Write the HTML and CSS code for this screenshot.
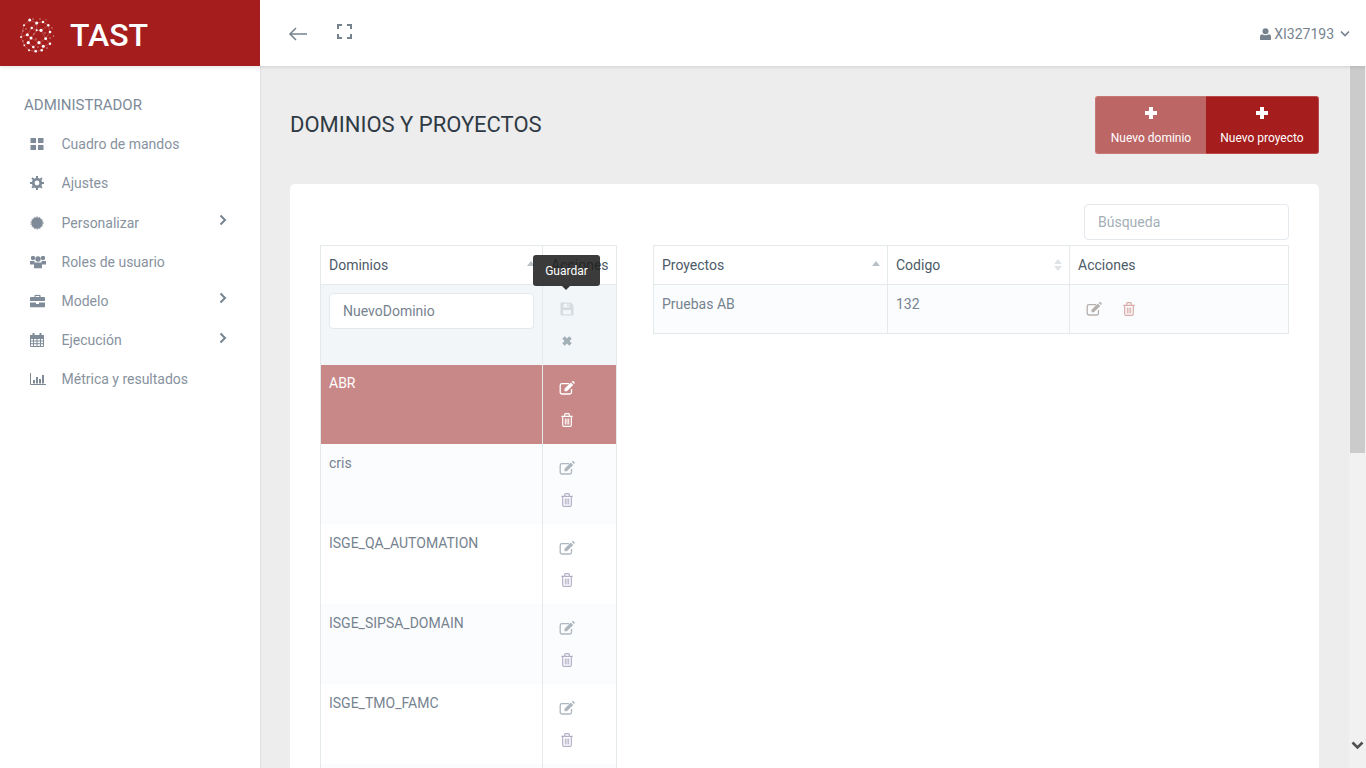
FILE: index.html
```html
<!DOCTYPE html>
<html lang="es">
<head>
    <meta charset="UTF-8">
    <title>TAST - Dominios y proyectos</title>
    <link rel="stylesheet" href="styles.css">
</head>
<body>
    <svg class="defs" width="0" height="0">
        <symbol id="i-edit" viewBox="0 0 16 14">
            <path d="M12.500 8v3.200c0 1-.8 1.800-1.800 1.800H3c-1 0-1.800-.8-1.800-1.800V4.500c0-1 .8-1.800 1.800-1.800h7" fill="none" stroke="currentColor" stroke-width="1.300"/>
            <path d="M5.500 7.800 11.800 1.500l2.400 2.400-6.300 6.300H5.500z" fill="currentColor"/>
            <path d="M12.700.7 13.500 0q.5-.2.9.100l1.300 1.300q.3.4 0 .9l-.8.800z" fill="currentColor"/>
        </symbol>
        <symbol id="i-trash" viewBox="0 0 12 14">
            <path d="M1.700 3.500V12c0 .8.500 1.400 1.200 1.400h6.200c.7 0 1.200-.6 1.200-1.400V3.500M.3 3.300h11.400M3.700 3V1.600Q3.700.7 4.500.7h3q.8 0 .8.900V3" fill="none" stroke="currentColor" stroke-width="1.200"/>
            <path d="M4.300 5.500v6M6 5.500v6M7.700 5.500v6" fill="none" stroke="currentColor"/>
        </symbol>
        <symbol id="i-save" viewBox="0 0 14 14">
            <path fill-rule="evenodd" d="M1.500.5h9.300L13.500 3.200v9c0 .7-.6 1.300-1.300 1.300H1.800c-.7 0-1.300-.6-1.300-1.300V1.800C.5 1.100 1 .5 1.500.5zM3.500 1.700v3.800h6V1.700zM7.300 2.300h1.400v2.500H7.300zM3 8v4.300h8V8z" fill="currentColor"/>
        </symbol>
        <symbol id="i-close" viewBox="0 0 12 12">
            <path d="M2.500 2.500l7 7M9.500 2.500l-7 7" fill="none" stroke="currentColor" stroke-width="3.400"/>
        </symbol>
        <symbol id="i-chev" viewBox="0 0 8 12">
            <path d="M1.500 1.500 6 6l-4.500 4.500" fill="none" stroke="currentColor" stroke-width="2"/>
        </symbol>
    </svg>

    <header class="topbar">
        <div class="brand">
            <svg class="brand-logo" width="36" height="36" viewBox="0 0 36 36">
                <g stroke="#fff" stroke-width=".5" opacity=".4" fill="none">
                    <path d="M9.700 3 16.700 6 23 5 28.300 8.300 30 15 25.700 21.700 30 26.700 23.300 29.300 21.700 33.300 15.700 34.300 9 33.300 4.300 28.300 1 20 4 8.300 9.700 3M16.700 6 11.700 11 7.300 17.700 11 21 8.300 25.700 13.300 30 19 25.700 25.700 21.700 21 13.300 16.700 13.300 11 21 19 25.700 23.300 29.300M11.700 11 16.700 13.300 16.700 6M21 13.300 28.300 8.300M7.300 17.700 1 20M8.300 25.700 4.300 28.300M13.300 30 15.700 34.300"/>
                </g>
                <g fill="#fff" opacity=".6">
                    <circle cx="13" cy="2" r=".7"/><circle cx="20" cy="2" r=".7"/><circle cx="26" cy="2.800" r=".6"/><circle cx="32" cy="11" r=".7"/>
                    <circle cx="33.500" cy="19" r=".7"/><circle cx="6" cy="12" r=".7"/><circle cx="3" cy="14" r=".7"/><circle cx="14" cy="17" r=".7"/>
                    <circle cx="25" cy="16" r=".7"/><circle cx="30" cy="21" r=".7"/><circle cx="16" cy="22" r=".7"/><circle cx="3" cy="24" r=".7"/>
                    <circle cx="27" cy="31" r=".7"/><circle cx="18" cy="30" r=".7"/>
                </g>
                <g fill="#fff">
                    <circle cx="9.700" cy="3" r="1.500"/><circle cx="16.700" cy="6" r="1.500"/><circle cx="23" cy="5" r="1.200"/>
                    <circle cx="4" cy="8.300" r="1"/><circle cx="28.300" cy="8.300" r="1.200"/><circle cx="11.700" cy="11" r="1.200"/>
                    <circle cx="21" cy="13.300" r="1.600"/><circle cx="16.700" cy="13.300" r="1"/><circle cx="30" cy="15" r="1.300"/>
                    <circle cx="7.300" cy="17.700" r="1.500"/><circle cx="1" cy="20" r=".9"/><circle cx="11" cy="21" r="1.500"/>
                    <circle cx="25.700" cy="21.700" r="1.400"/><circle cx="19" cy="25.700" r="1.600"/><circle cx="8.300" cy="25.700" r="1.600"/>
                    <circle cx="30" cy="26.700" r="1.200"/><circle cx="13.300" cy="30" r="1.300"/><circle cx="23.300" cy="29.300" r="1.500"/>
                    <circle cx="4.300" cy="28.300" r=".9"/><circle cx="15.700" cy="34.300" r="1.300"/><circle cx="21.700" cy="33.300" r="1.300"/>
                    <circle cx="9" cy="33.300" r="1"/>
                </g>
            </svg>
            <span class="brand-name">TAST</span>
        </div>
        <div class="topbar-tools">
            <svg class="tool-back" width="20" height="16" viewBox="0 0 20 16">
                <path d="M19 8H2M8 2 2 8l6 6" fill="none" stroke="currentColor" stroke-width="1.500"/>
            </svg>
            <svg class="tool-full" width="15" height="15" viewBox="0 0 15 15">
                <path d="M1 5V1h4M10 1h4v4M14 10v4h-4M5 14H1v-4" fill="none" stroke="currentColor" stroke-width="2"/>
            </svg>
        </div>
        <div class="user-menu">
            <svg width="11" height="12" viewBox="0 0 11 12">
                <circle cx="5.500" cy="3.200" r="3" fill="currentColor"/>
                <path d="M0 12V8.500Q0 6.500 2 6.200 5.500 8.200 9 6.200 11 6.500 11 8.500V12z" fill="currentColor"/>
            </svg>
            <span>XI327193</span>
            <svg class="user-caret" width="10" height="7" viewBox="0 0 10 7">
                <path d="M1 1.500 5 5.500l4-4" fill="none" stroke="currentColor" stroke-width="1.700"/>
            </svg>
        </div>
    </header>

    <div class="layout">
        <aside class="sidebar">
            <div class="side-title">ADMINISTRADOR</div>
            <ul class="side-menu">
                <li>
                    <svg width="14" height="12" viewBox="0 0 14 12"><path d="M.5 0h5.500v5H.5zM8 0h5.500v5H8zM.5 7h5.500v5H.5zM8 7h5.500v5H8z" fill="currentColor"/></svg>
                    <span>Cuadro de mandos</span>
                </li>
                <li>
                    <svg width="14" height="14" viewBox="0 0 14 14"><circle cx="7" cy="7" r="3.800" fill="none" stroke="currentColor" stroke-width="2.800"/><path d="M7 0v14M0 7h14M2 2l10 10M12 2 2 12" stroke="currentColor" stroke-width="2" stroke-dasharray="2.300 9.400"/></svg>
                    <span>Ajustes</span>
                </li>
                <li>
                    <svg width="14" height="14" viewBox="0 0 14 14"><circle cx="7" cy="7" r="5.700" fill="currentColor"/><circle cx="7" cy="7" r="6" fill="none" stroke="currentColor" stroke-width="1" stroke-dasharray="1.500 1.200"/></svg>
                    <span>Personalizar</span>
                    <svg class="side-arrow"><use href="#i-chev"/></svg>
                </li>
                <li>
                    <svg width="16" height="13" viewBox="0 0 16 13"><circle cx="3" cy="2.500" r="2.200" fill="currentColor"/><circle cx="13" cy="2.500" r="2.200" fill="currentColor"/><circle cx="8" cy="3.500" r="2.700" fill="currentColor"/><path d="M0 5.500h4.500V9H0zM11.500 5.500H16V9h-4.500zM4 7h8v6H4z" fill="currentColor"/></svg>
                    <span>Roles de usuario</span>
                </li>
                <li>
                    <svg width="15" height="13" viewBox="0 0 15 13"><path d="M0 3.500q0-1 1-1h3.500V1q0-.7.700-.7h4.600q.7 0 .7.700v1.500H14q1 0 1 1v3H0zM5.700 1.500v1h3.600v-1zM0 8h6v1.500h3V8h6v4q0 1-1 1H1q-1 0-1-1z" fill="currentColor"/></svg>
                    <span>Modelo</span>
                    <svg class="side-arrow"><use href="#i-chev"/></svg>
                </li>
                <li>
                    <svg width="14" height="14" viewBox="0 0 14 14"><path d="M.5 2.500h13v11H.5zM.5 5.500h13M.5 8h13M.5 10.700h13M3.500 5.500v8M7 5.500v8M10.500 5.500v8" fill="none" stroke="currentColor"/><path d="M0 2h14v3.500H0zM2.500 0h2v3h-2zM9.500 0h2v3h-2z" fill="currentColor"/></svg>
                    <span>Ejecución</span>
                    <svg class="side-arrow"><use href="#i-chev"/></svg>
                </li>
                <li>
                    <svg width="16" height="12" viewBox="0 0 16 12"><path d="M.5 0v11.500H16" fill="none" stroke="currentColor"/><path d="M3 7h2v3.500H3zM6 4h2v6.500H6zM9 6h2v4.500H9zM12 2h2v8.500h-2z" fill="currentColor"/></svg>
                    <span>Métrica y resultados</span>
                </li>
            </ul>
        </aside>

        <main class="main">
            <div class="page-head">
                <h1>DOMINIOS Y PROYECTOS</h1>
                <div class="btn-group">
                    <button class="btn btn-light"><span class="plus"></span>Nuevo dominio</button>
                    <button class="btn btn-dark"><span class="plus"></span>Nuevo proyecto</button>
                </div>
            </div>

            <section class="card">
                <div class="search-row">
                    <input class="search" type="text" placeholder="Búsqueda">
                </div>
                <div class="tables">
                    <table class="grid grid-domains">
                        <thead>
                            <tr>
                                <th class="col-name">Dominios<span class="sort sort-up"></span></th>
                                <th class="col-actions">Acciones
                                    <div class="tooltip">Guardar</div>
                                </th>
                            </tr>
                        </thead>
                        <tbody>
                            <tr class="row-new">
                                <td><input class="name-input" type="text" value="NuevoDominio"></td>
                                <td class="actions">
                                    <svg class="ic ic-save" width="14" height="14"><use href="#i-save"/></svg>
                                    <svg class="ic ic-close" width="12" height="12"><use href="#i-close"/></svg>
                                </td>
                            </tr>
                            <tr class="row-selected">
                                <td>ABR</td>
                                <td class="actions">
                                    <svg class="ic" width="16" height="14"><use href="#i-edit"/></svg>
                                    <svg class="ic" width="12" height="14"><use href="#i-trash"/></svg>
                                </td>
                            </tr>
                            <tr class="row-odd">
                                <td>cris</td>
                                <td class="actions">
                                    <svg class="ic ic-edit" width="16" height="14"><use href="#i-edit"/></svg>
                                    <svg class="ic ic-trash" width="12" height="14"><use href="#i-trash"/></svg>
                                </td>
                            </tr>
                            <tr>
                                <td>ISGE_QA_AUTOMATION</td>
                                <td class="actions">
                                    <svg class="ic ic-edit" width="16" height="14"><use href="#i-edit"/></svg>
                                    <svg class="ic ic-trash" width="12" height="14"><use href="#i-trash"/></svg>
                                </td>
                            </tr>
                            <tr class="row-odd">
                                <td>ISGE_SIPSA_DOMAIN</td>
                                <td class="actions">
                                    <svg class="ic ic-edit" width="16" height="14"><use href="#i-edit"/></svg>
                                    <svg class="ic ic-trash" width="12" height="14"><use href="#i-trash"/></svg>
                                </td>
                            </tr>
                            <tr>
                                <td>ISGE_TMO_FAMC</td>
                                <td class="actions">
                                    <svg class="ic ic-edit" width="16" height="14"><use href="#i-edit"/></svg>
                                    <svg class="ic ic-trash" width="12" height="14"><use href="#i-trash"/></svg>
                                </td>
                            </tr>
                            <tr class="row-odd">
                                <td></td>
                                <td></td>
                            </tr>
                        </tbody>
                    </table>

                    <table class="grid grid-projects">
                        <thead>
                            <tr>
                                <th class="col-project">Proyectos<span class="sort sort-up"></span></th>
                                <th class="col-code">Codigo<span class="sort sort-both"></span></th>
                                <th>Acciones</th>
                            </tr>
                        </thead>
                        <tbody>
                            <tr class="row-odd">
                                <td>Pruebas AB</td>
                                <td>132</td>
                                <td>
                                    <div class="actions-inline">
                                        <svg class="ic ic-edit-warm" width="16" height="14"><use href="#i-edit"/></svg>
                                        <svg class="ic ic-trash-red" width="12" height="14"><use href="#i-trash"/></svg>
                                    </div>
                                </td>
                            </tr>
                        </tbody>
                    </table>
                </div>
            </section>
        </main>

        <div class="scrollbar">
            <div class="scroll-thumb"></div>
            <div class="scroll-track"></div>
            <svg class="scroll-down" width="13" height="9" viewBox="0 0 13 9">
                <path d="M1.500 1.500 6.500 6.500l5-5" fill="none" stroke="currentColor" stroke-width="2.500"/>
            </svg>
        </div>
    </div>
</body>
</html>
```

FILE: styles.css
```css
* {
    box-sizing: border-box;
}
html, body {
    margin: 0;
    height: 100%;
    overflow: hidden;
}
body {
    font-family: Roboto, "Liberation Sans", sans-serif;
    font-size: 14px;
    color: #76838f;
    background: #ededed;
}
.defs {
    position: absolute;
}

/* barra superior */
.topbar {
    position: relative;
    z-index: 2;
    display: flex;
    align-items: center;
    height: 66px;
    padding-top: 2px;
    background: #fff;
    box-shadow: 0 1px 4px rgba(0,0,0,0.12);
}
.brand {
    display: flex;
    align-items: center;
    width: 260px;
    height: 66px;
    margin-top: -2px;
    padding: 4px 0 0 20px;
    background: #a51d1d;
}
.brand-logo {
    margin-right: 14px;
}
.brand-name {
    color: #fff;
    font-size: 32px;
    font-weight: 500;
}
.topbar-tools {
    display: flex;
    align-items: center;
    gap: 29px;
    padding-left: 28px;
    color: #76838f;
}
.tool-full {
    margin-top: -5px;
}
.user-menu {
    display: flex;
    align-items: center;
    gap: 3px;
    margin-left: auto;
    margin-right: 16px;
    margin-top: -1px;
    color: #76838f;
}
.user-caret {
    margin-left: 3px;
}

/* columnas */
.layout {
    display: flex;
    height: 702px;
}
.sidebar {
    flex: none;
    width: 261px;
    padding-top: 30px;
    background: #fff;
    border-right: 1px solid #e2e2e2;
    color: #87929e;
}
.side-title {
    padding-left: 24px;
    line-height: 18px;
    font-size: 15px;
    color: #7d8a99;
}
.side-menu {
    list-style: none;
    margin: 10.600px 0 0;
    padding: 0;
}
.side-menu li {
    position: relative;
    display: flex;
    align-items: center;
    height: 39.200px;
    padding-left: 61.500px;
}
.side-menu li > svg:first-child {
    position: absolute;
    left: 30px;
    top: 50%;
    transform: translateY(-50%);
    color: #7f8b98;
}
.side-arrow {
    position: absolute;
    left: 219px;
    top: 11px;
    width: 8px;
    height: 12px;
    color: #76838f;
}

/* contenido */
.main {
    flex: 1;
    min-width: 0;
    padding: 30px 30px 0 29px;
}
.page-head {
    display: flex;
    align-items: center;
    justify-content: space-between;
    height: 58px;
}
.page-head h1 {
    margin: -2px 0 0;
    color: #2f3a45;
    font-size: 22px;
    font-weight: 400;
}
.btn-group {
    display: flex;
}
.btn {
    display: flex;
    flex-direction: column;
    align-items: center;
    justify-content: center;
    gap: 12px;
    height: 58px;
    padding: 1px 0 0;
    border: 1px solid #b84a4a;
    color: #fff;
    font-family: inherit;
    font-size: 12px;
    background: #a51d1d;
}
.btn-light {
    width: 111px;
    border-right: 0;
    border-color: #c87777;
    border-radius: 3px 0 0 3px;
    background: #bd6666;
}
.btn-dark {
    width: 113px;
    border-left: 0;
    border-radius: 0 3px 3px 0;
}
.plus {
    position: relative;
    width: 12px;
    height: 12px;
    background:
        linear-gradient(#fff, #fff) center / 12px 4px no-repeat,
        linear-gradient(#fff, #fff) center / 4px 12px no-repeat;
}
.card {
    margin-top: 30px;
    height: 620px;
    padding: 20px 30px;
    border-radius: 5px;
    background: #fff;
}
.search-row {
    display: flex;
    justify-content: flex-end;
}
.search {
    width: 205px;
    height: 36px;
    padding: 0 13px;
    border: 1px solid #e4e9ee;
    border-radius: 4px;
    font-family: inherit;
    font-size: 14px;
    outline: none;
}
.search::placeholder {
    color: #a3afb7;
}
.tables {
    display: flex;
    align-items: flex-start;
    gap: 36px;
    margin-top: 5px;
}

/* tablas */
.grid {
    border-collapse: collapse;
    table-layout: fixed;
    background: #fff;
}
.grid th, .grid td {
    border: 1px solid #e4eaec;
    padding: 0 8px;
    text-align: left;
    vertical-align: top;
}
.grid th {
    position: relative;
    height: 39px;
    vertical-align: middle;
    color: #4d5a68;
    font-weight: 400;
}
.grid td {
    padding-top: 10px;
    line-height: 18px;
}
.grid tbody td {
    border-top: 0;
    border-bottom: 0;
}
.grid-projects tbody td {
    border-bottom: 1px solid #e4eaec;
}
.grid-domains {
    width: 297px;
}
.grid-domains tbody tr {
    height: 80px;
}
.grid-domains tbody .row-selected {
    height: 79px;
}
.col-name {
    width: 222px;
}
.grid-projects {
    width: 636px;
}
.grid-projects tbody tr {
    height: 49px;
}
.col-project {
    width: 234px;
}
.col-code {
    width: 182px;
}
.row-odd {
    background: #fbfcfe;
}
.row-new {
    background: #f2f6f9;
}
.grid .row-new td {
    padding-top: 8px;
}
.row-selected {
    background: #c98888;
    color: #fff;
}
.grid .row-selected td {
    padding-top: 9px;
}
.grid td.actions {
    padding: 17px 0 0 16px;
    line-height: 0;
}
.grid .row-selected td.actions {
    padding-top: 16px;
}
.grid .row-new td.actions {
    padding-top: 17px;
}
.ic {
    display: block;
    margin: 0 0 18px;
}
.ic:last-child {
    margin-bottom: 0;
}
.ic[width="12"] {
    margin-left: 2px;
}
.ic-save {
    margin-left: 1px;
    margin-bottom: 19px;
    color: #d5dbe0;
}
.ic-close {
    color: #a3afb7;
}
.ic-edit {
    color: #aeb6c0;
}
.ic-trash {
    color: #b3aec7;
}
.ic-edit-warm {
    color: #b5b0ac;
}
.ic-trash-red {
    color: #d9aca8;
}
.actions-inline {
    display: flex;
    gap: 21px;
    padding: 7px 0 0 8px;
}
.actions-inline .ic {
    margin: 0;
}
.name-input {
    width: 205px;
    height: 36px;
    padding: 0 13px;
    border: 1px solid #e4e9ee;
    border-radius: 4px;
    color: #76838f;
    font-family: inherit;
    font-size: 14px;
    outline: none;
}

/* flechas de orden */
.sort {
    position: absolute;
    right: 7px;
    top: 15px;
    width: 0;
    height: 0;
    border-left: 4px solid transparent;
    border-right: 4px solid transparent;
}
.sort-up {
    border-bottom: 5px solid #b9c0c6;
}
.sort-both {
    top: 13px;
    border-bottom: 5px solid #dfe3e6;
}
.sort-both::after {
    content: "";
    position: absolute;
    left: -4px;
    top: 7px;
    border-left: 4px solid transparent;
    border-right: 4px solid transparent;
    border-top: 5px solid #dfe3e6;
}

.tooltip {
    position: absolute;
    left: -10px;
    top: 9px;
    width: 67px;
    height: 31px;
    border-radius: 3px;
    background: rgba(30,30,30,0.87);
    color: #fff;
    font-size: 12px;
    line-height: 33px;
    text-align: center;
}
.tooltip::after {
    content: "";
    position: absolute;
    left: 29px;
    top: 31px;
    border-left: 4px solid transparent;
    border-right: 4px solid transparent;
    border-top: 4px solid #333;
}

/* barra de desplazamiento */
.scrollbar {
    flex: none;
    display: flex;
    flex-direction: column;
    align-items: center;
    width: 17px;
    background: #f1f1f1;
}
.scroll-thumb {
    width: 15px;
    height: 387px;
    background: #cbcbcb;
}
.scroll-track {
    flex: 1;
}
.scroll-down {
    margin-bottom: 18px;
    color: #505050;
}
```
